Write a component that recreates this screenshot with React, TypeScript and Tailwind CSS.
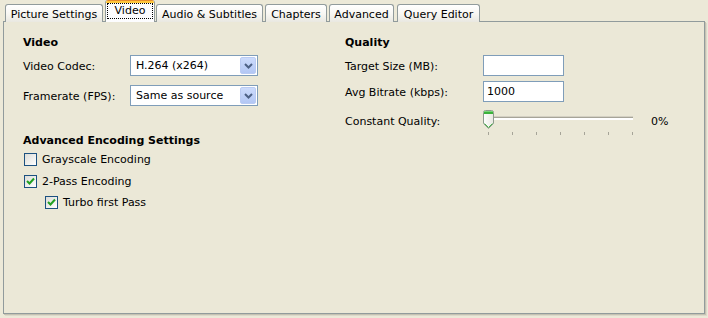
import React from "react";

function Tab({ label, w, selected = false }: { label: string; w: number; selected?: boolean }) {
  if (selected) {
    return (
      <div
        className="relative z-10 h-[22px] flex flex-col bg-[#FCFCFE] border-x border-[#919B9C] rounded-t-[3px] overflow-hidden"
        style={{ width: w }}
      >
        <div className="h-[1px] bg-[#E68B2C] shrink-0" />
        <div className="h-[2px] bg-[#FFC73C] shrink-0" />
        <div className="flex-1 flex items-start justify-center pt-[0px] px-[1px]">
          <div className="h-[16px] w-full border border-dotted border-black flex items-center justify-center leading-[13px] pb-[1px]">
            {label}
          </div>
        </div>
      </div>
    );
  }
  return (
    <div
      className="h-[18px] flex items-center justify-center border-x border-t border-[#919B9C] rounded-t-[3px] bg-gradient-to-b from-[#FFFFFF] via-[#F8F7F3] to-[#E9E8E1] leading-[13px] pt-[1px]"
      style={{ width: w }}
    >
      {label}
    </div>
  );
}

function Select({ value }: { value: string }) {
  return (
    <div className="w-[128px] h-[21px] border border-[#7F9DB9] bg-white flex items-center justify-between pl-[5px] pr-[1px]">
      <span className="leading-[13px]">{value}</span>
      <div className="w-[16px] h-[17px] rounded-[2px] border border-[#BACBF3] bg-gradient-to-b from-[#CCDBFC] to-[#B3C7F4] flex items-center justify-center">
        <svg width="9" height="6" viewBox="0 0 9 6">
          <path d="M1 1 L4.5 4.5 L8 1" fill="none" stroke="#4D6185" strokeWidth="2" />
        </svg>
      </div>
    </div>
  );
}

function TextBox({ value = "" }: { value?: string }) {
  return (
    <div className="w-[81px] h-[21px] border border-[#7F9DB9] bg-white flex items-center pl-[3px] leading-[13px]">
      {value}
    </div>
  );
}

function Checkbox({ checked, label }: { checked: boolean; label: string }) {
  return (
    <div className="flex items-center h-[13px]">
      <div className="w-[13px] h-[13px] border border-[#1C5180] bg-gradient-to-br from-[#DCDCD7] to-[#FFFFFF] flex items-center justify-center shrink-0">
        {checked && (
          <svg width="9" height="9" viewBox="0 0 9 9">
            <path d="M1 4 L3.5 6.5 L8 1.5" fill="none" stroke="#21A121" strokeWidth="2" />
          </svg>
        )}
      </div>
      <span className="ml-[5px] leading-[13px]">{label}</span>
    </div>
  );
}

function Slider() {
  const ticks = [0, 1, 2, 3, 4, 5, 6];
  return (
    <div className="relative w-[160px] h-[27px]">
      <div className="absolute left-[5px] top-[7px] w-[145px] h-[1px] bg-[#A6A498]" />
      <div className="absolute left-[5px] top-[8px] w-[145px] h-[2px] bg-white" />
      <div className="absolute left-[5px] top-[6px] w-[145px] h-[1px] bg-[#D3D0C3]" />
      {ticks.map((t) => (
        <div
          key={t}
          className="absolute top-[22px] w-[1px] h-[3px] bg-[#A6A498]"
          style={{ left: 5 + t * 24 }}
        />
      ))}
      <svg className="absolute left-0 top-0" width="11" height="19" viewBox="0 0 11 19">
        <defs>
          <linearGradient id="tb" x1="0" y1="0" x2="1" y2="0">
            <stop offset="0" stopColor="#FFFFFF" />
            <stop offset="1" stopColor="#E8E7E0" />
          </linearGradient>
        </defs>
        <path d="M0.5 2.5 Q0.5 0.5 2.5 0.5 L8.5 0.5 Q10.5 0.5 10.5 2.5 L10.5 13.5 L5.5 18.5 L0.5 13.5 Z" fill="url(#tb)" stroke="#8D9A8D" />
        <rect x="1" y="1" width="9" height="3" fill="#3CB23C" />
        <rect x="1" y="1" width="9" height="1" fill="#78D678" />
        <path d="M1.5 13.5 L5.5 17.5 L9.5 13.5" fill="none" stroke="#4DBA4D" strokeWidth="1" />
      </svg>
    </div>
  );
}

export default function App() {
  return (
    <div className="w-[708px] h-[318px] bg-[#ECE9D8] text-[11px] text-black overflow-hidden font-['DejaVu_Sans',sans-serif]">
      <div className="flex items-end h-[22px] pl-[5px]">
        <Tab label="Picture Settings" w={98} />
        <div className="ml-[2px]">
          <Tab label="Video" w={50} selected />
        </div>
        <div className="ml-[1px]">
          <Tab label="Audio & Subtitles" w={107} />
        </div>
        <div className="ml-[2px]">
          <Tab label="Chapters" w={62} />
        </div>
        <div className="ml-[2px]">
          <Tab label="Advanced" w={65} />
        </div>
        <div className="ml-[3px]">
          <Tab label="Query Editor" w={83} />
        </div>
      </div>
      <div className="ml-[3px] mt-[-1px] w-[702px] h-[293px] border border-[#919B9C] bg-[#EBE8D7] shadow-[1px_1px_0_#C5C2B2,2px_2px_0_#DCD9CB] flex pl-[19px] pt-[14px]">
        {/* left column */}
        <div className="w-[322px] flex flex-col">
          <div className="font-bold leading-[13px] h-[13px]">Video</div>
          <div className="mt-[6px] flex items-center h-[21px]">
            <span className="w-[107px] leading-[13px] pt-[1px]">Video Codec:</span>
            <Select value="H.264 (x264)" />
          </div>
          <div className="mt-[9px] flex items-center h-[21px]">
            <span className="w-[107px] leading-[13px] pt-[1px]">Framerate (FPS):</span>
            <Select value="Same as source" />
          </div>
          <div className="mt-[28px] font-bold leading-[13px] h-[13px]">Advanced Encoding Settings</div>
          <div className="mt-[6px] pl-[1px]">
            <Checkbox checked={false} label="Grayscale Encoding" />
          </div>
          <div className="mt-[9px] pl-[1px]">
            <Checkbox checked label="2-Pass Encoding" />
          </div>
          <div className="mt-[8px] pl-[22px]">
            <Checkbox checked label="Turbo first Pass" />
          </div>
        </div>
        {/* right column */}
        <div className="flex flex-col">
          <div className="font-bold leading-[13px] h-[13px]">Quality</div>
          <div className="mt-[6px] flex items-center h-[21px]">
            <span className="w-[138px] leading-[13px] pt-[1px]">Target Size (MB):</span>
            <TextBox />
          </div>
          <div className="mt-[5px] flex items-center h-[21px]">
            <span className="w-[138px] leading-[13px] pt-[1px]">Avg Bitrate (kbps):</span>
            <TextBox value="1000" />
          </div>
          <div className="mt-[8px] flex items-start">
            <span className="w-[138px] mt-[5px] leading-[13px]">Constant Quality:</span>
            <Slider />
            <span className="ml-[8px] mt-[5px] leading-[13px]">0%</span>
          </div>
        </div>
      </div>
    </div>
  );
}
